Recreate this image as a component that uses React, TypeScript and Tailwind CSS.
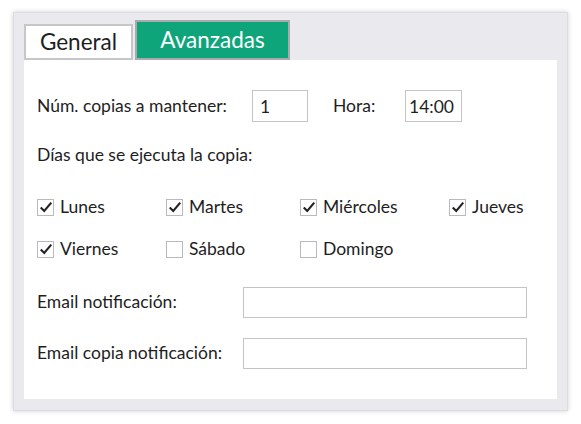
import React from 'react'

const font = { fontFamily: 'Lato, "Open Sans", sans-serif' }

function Box({ checked }: { checked: boolean }) {
  return (
    <span className="w-[17px] h-[17px] border border-[#b9b9c0] bg-white flex items-center justify-center shrink-0">
      {checked && (
        <svg viewBox="0 0 16 16" className="w-[14px] h-[14px]">
          <path d="M2 8.5 L6 12.5 L14 3" fill="none" stroke="#222" strokeWidth="2.4" />
        </svg>
      )}
    </span>
  )
}

function Day({ label, checked, w }: { label: string; checked: boolean; w: string }) {
  return (
    <label className={`flex items-center gap-[6px] ${w}`}>
      <Box checked={checked} />
      <span>{label}</span>
    </label>
  )
}

export default function App() {
  return (
    <div className="w-[581px] h-[424px] bg-white pt-3 pl-[13px]" style={font}>
      <div className="w-[555px] h-[399px] bg-[#eae9ee] border border-[#dcdce1] shadow-[0_0_5px_rgba(0,0,0,0.18)] pt-[7px] px-[10px] pb-[11px] flex flex-col">
        {/* pestañas */}
        <div className="flex items-end gap-[2px] h-[40px]">
          <div className="w-[109px] h-[36px] bg-white border-2 border-[#c6c6cb] flex items-center justify-center text-[22.5px] text-[#1e1e1e]">
            General
          </div>
          <div className="w-[155px] h-[40px] bg-[#0fa57b] border-2 border-[#a9aaad] flex items-center justify-center text-[22.5px] text-white">
            Avanzadas
          </div>
        </div>

        {/* contenido */}
        <div className="flex-1 bg-white pl-[13px] pt-[30px] text-[17.5px] text-[#1e1e1e]">
          <div className="flex items-center h-8">
            <span className="w-[215px]">Núm. copias a mantener:</span>
            <input
              readOnly
              value="1"
              className="w-[56px] h-8 border border-[#c3c3c8] px-[7px] text-[17.5px] outline-none"
            />
            <span className="w-[72px] ml-[25px]">Hora:</span>
            <input
              readOnly
              value="14:00"
              className="w-[57px] h-8 border border-[#c3c3c8] px-[3px] text-[17.5px] outline-none"
            />
          </div>

          <div className="mt-[21px] leading-6">Días que se ejecuta la copia:</div>

          <div className="mt-[28px] flex flex-col gap-[18px] leading-6">
            <div className="flex">
              <Day label="Lunes" checked w="w-[129px]" />
              <Day label="Martes" checked w="w-[134px]" />
              <Day label="Miércoles" checked w="w-[149px]" />
              <Day label="Jueves" checked w="w-[100px]" />
            </div>
            <div className="flex">
              <Day label="Viernes" checked w="w-[129px]" />
              <Day label="Sábado" checked={false} w="w-[134px]" />
              <Day label="Domingo" checked={false} w="w-[149px]" />
            </div>
          </div>

          <div className="mt-[26px] flex flex-col gap-[20px]">
            <div className="flex items-center">
              <span className="w-[206px]">Email notificación:</span>
              <input readOnly className="w-[284px] h-[31px] border border-[#c3c3c8] outline-none" />
            </div>
            <div className="flex items-center">
              <span className="w-[206px]">Email copia notificación:</span>
              <input readOnly className="w-[284px] h-[31px] border border-[#c3c3c8] outline-none" />
            </div>
          </div>
        </div>
      </div>
    </div>
  )
}
